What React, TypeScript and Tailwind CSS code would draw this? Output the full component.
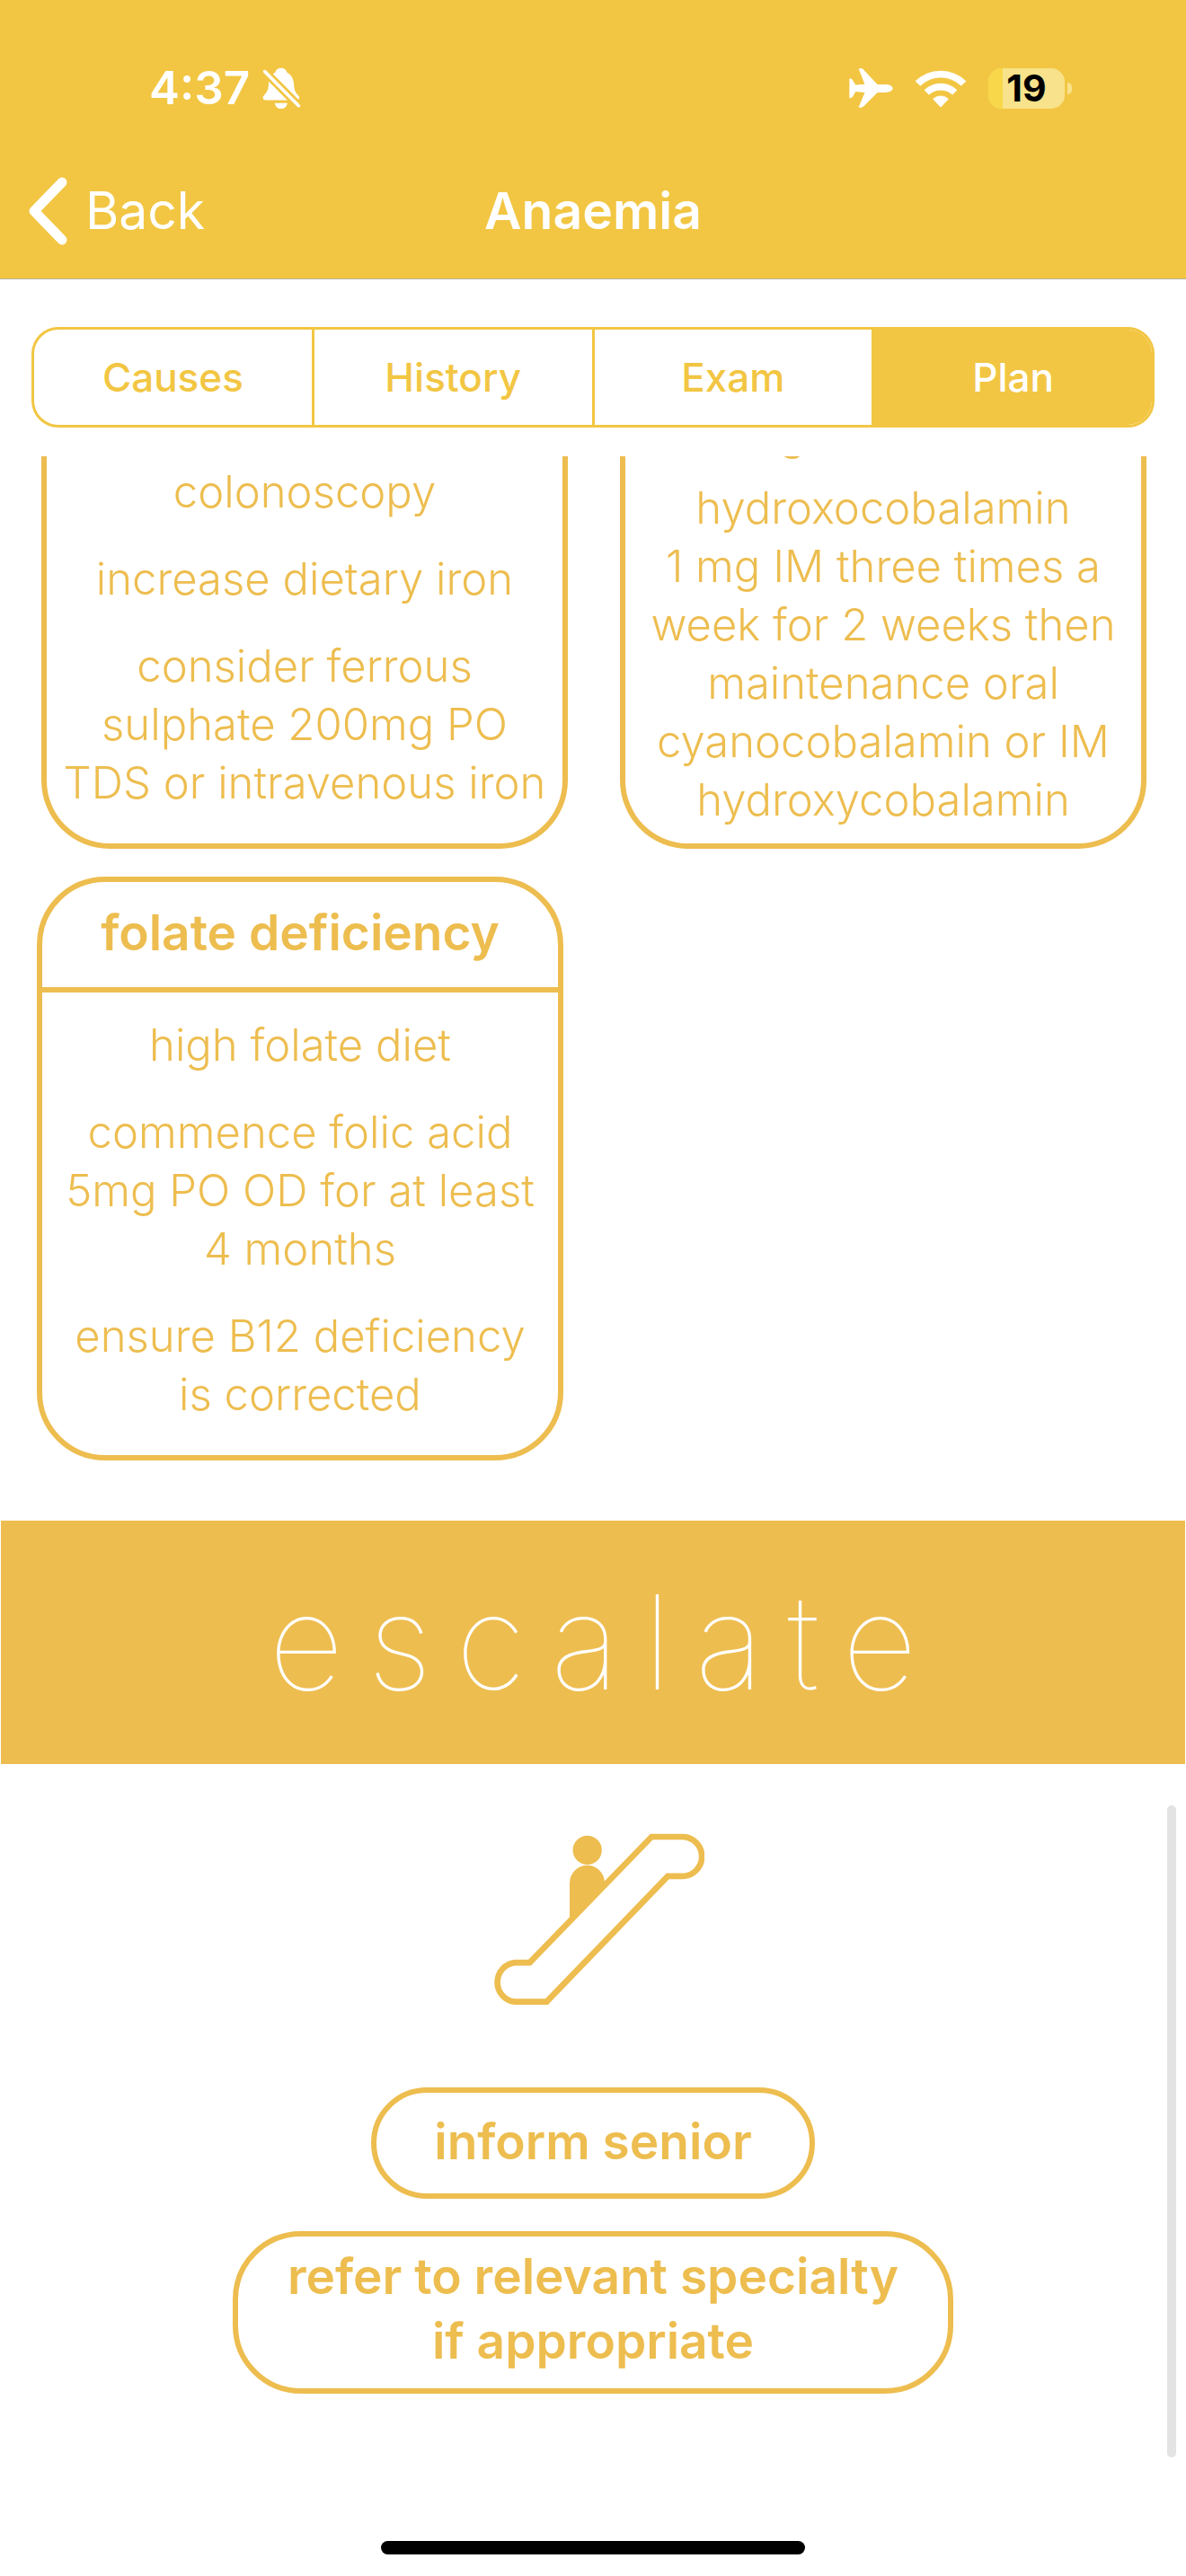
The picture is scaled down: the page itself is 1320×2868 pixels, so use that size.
import type { ReactNode } from "react";

function BellOffIcon() {
  return (
    <svg viewBox="64 44 130 140" className="h-[47px] w-[43px]" aria-hidden="true">
      <path
        fill="#fff"
        d="M127 45C117 45 110 50 107 60C92 68 86 82 85 98C84 120 80 125 70 137C62 146 66 153 76 153H178C188 153 192 146 184 137C174 125 171 118 170 98C168 80 162 68 147 60C144 50 137 45 127 45Z"
      />
      <path fill="#fff" d="M106 163H148C146 176 138 182 127 182S108 176 106 163Z" />
      <path stroke="#f2c643" strokeWidth="28" d="M66 51L196 182" />
      <path stroke="#fff" strokeWidth="11" strokeLinecap="round" d="M72 57L186 172" />
    </svg>
  );
}

function AirplaneIcon() {
  return (
    <svg viewBox="50 47 149 134" className="h-[44px] w-[49px]" aria-hidden="true">
      <path
        fill="#fff"
        d="M198 115C198 108 188 102 172 102H146L100 53C97 49 94 48 91 48H82L103 101L72 103L62 87C60 83 57 81 51 82V148C57 148 60 147 62 144L72 126L103 129L82 180H91C94 180 97 179 100 176L146 129H172C188 129 198 123 198 115Z"
      />
    </svg>
  );
}

function WifiIcon() {
  return (
    <svg viewBox="268 44 175 129" className="h-[43px] w-[58px]" aria-hidden="true">
      <g fill="#fff" stroke="#fff" strokeWidth="2" strokeLinejoin="round">
        <path d="M271 84A122 122 0 0 1 440 84L424 99A98 98 0 0 0 287 99Z" />
        <path d="M301 114A79 79 0 0 1 410 114L395 129A58 58 0 0 0 316 129Z" />
        <path d="M330 144A37 37 0 0 1 381 144L355.500 171Z" />
      </g>
    </svg>
  );
}

function EscalatorIcon() {
  return (
    <svg viewBox="84 95 708 577" className="h-[192px] w-[236px]" aria-hidden="true">
      <g fill="#edbd4f">
        <circle cx="401" cy="151.500" r="48.500" />
        <path d="M342 390V261A58.500 58.500 0 0 1 459 261V270Z" />
      </g>
      <path
        fill="#fff"
        stroke="#edbd4f"
        strokeWidth="20"
        d="M616 107H718A66 66 0 0 1 718 239H670L265 659H158A66 66 0 0 1 158 528H208Z"
      />
    </svg>
  );
}

function Battery({ level }: { level: number }) {
  return (
    <div className="flex items-center gap-[3px]">
      <div className="grid h-[45px] w-[85px] items-center rounded-[15px] bg-[#f8e28b]">
        <div
          className="col-start-1 row-start-1 h-full rounded-l-[15px] bg-[#f8d74a]"
          style={{ width: `${level}%` }}
        />
        <span className="col-start-1 row-start-1 text-center text-[41px] leading-[45px] font-bold text-black">
          {level}
        </span>
      </div>
      <div className="h-[13px] w-[5px] rounded-r-full bg-[#f8e28b]" />
    </div>
  );
}

function Lines({ of }: { of: string[] }) {
  return (
    <p>
      {of.map((line) => (
        <span key={line} className="block">
          {line}
        </span>
      ))}
    </p>
  );
}

function CardBody({ className, children }: { className: string; children: ReactNode }) {
  return (
    <div className={`flex flex-col text-center text-[49px] leading-[65px] font-light ${className}`}>
      {children}
    </div>
  );
}

const tabs = ["Causes", "History", "Exam", "Plan"];

export default function App() {
  return (
    <div className="flex min-h-screen flex-col bg-white font-['Inter',sans-serif] text-[#edbd4f]">
      <header className="border-b border-[#b5b19f] bg-[#f2c643] text-white">
        <div className="flex h-[160px] items-center justify-between pt-9 pr-[127px] pl-[166px]">
          <div className="flex items-center gap-[14px]">
            <span className="text-[51px] leading-[60px] font-semibold">4:37</span>
            <BellOffIcon />
          </div>
          <div className="flex items-center gap-6">
            <AirplaneIcon />
            <WifiIcon />
            <Battery level={19} />
          </div>
        </div>
        <nav className="grid h-[150px] grid-cols-3 items-center px-[31px] text-[57px] leading-[72px]">
          <button type="button" className="flex items-center gap-5">
            <svg viewBox="0 0 44 76" className="h-[76px] w-[44px]" fill="none" aria-hidden="true">
              <path
                d="M38 6L7 38L38 70"
                stroke="#fff"
                strokeWidth="11"
                strokeLinecap="round"
                strokeLinejoin="round"
              />
            </svg>
            Back
          </button>
          <h1 className="text-center font-semibold">Anaemia</h1>
        </nav>
      </header>

      <div className="mx-[35px] mt-[53px] mb-8 flex h-[112px] overflow-hidden rounded-[30px] border-[3px] border-[#f2c643] text-[44px] font-medium text-[#f2c643]">
        {tabs.map((tab) => (
          <button
            key={tab}
            type="button"
            aria-pressed={tab === "Plan"}
            className="flex-1 border-l-[3px] border-[#f2c643] first:border-l-0 aria-pressed:bg-[#f2c643] aria-pressed:text-white"
          >
            {tab}
          </button>
        ))}
      </div>

      <main className="relative flex-1 overflow-hidden">
        <div className="grid grid-cols-2 gap-[58px] pr-[44px] pl-[46px]">
          <section className="rounded-b-[76px] border-x-[6px] border-b-[6px] border-[#edbd4f]">
            <CardBody className="gap-8 pt-[7px] pb-[35px]">
              <p>colonoscopy</p>
              <p>increase dietary iron</p>
              <Lines of={["consider ferrous", "sulphate 200mg PO", "TDS or intravenous iron"]} />
            </CardBody>
          </section>
          <section className="rounded-b-[76px] border-x-[6px] border-b-[6px] border-[#edbd4f]">
            <CardBody className="-mt-[58px] gap-[18px] pb-4">
              <p className="pr-[202px]">g</p>
              <Lines
                of={[
                  "hydroxocobalamin",
                  "1 mg IM three times a",
                  "week for 2 weeks then",
                  "maintenance oral",
                  "cyanocobalamin or IM",
                  "hydroxycobalamin",
                ]}
              />
            </CardBody>
          </section>
        </div>

        <div className="mt-[31px] grid grid-cols-2 gap-[58px] pr-[49px] pl-[41px]">
          <section className="rounded-[76px] border-[6px] border-[#edbd4f]">
            <h2 className="border-b-[6px] border-[#edbd4f] pt-5 pb-[25px] text-center text-[55px] leading-[72px] font-semibold">
              folate deficiency
            </h2>
            <CardBody className="gap-8 pt-[26px] pb-[35px]">
              <p>high folate diet</p>
              <Lines of={["commence folic acid", "5mg PO OD for at least", "4 months"]} />
              <Lines of={["ensure B12 deficiency", "is corrected"]} />
            </CardBody>
          </section>
        </div>

        <h2 className="mx-px mt-[67px] flex h-[271px] items-center justify-center bg-[#edbd4f] pl-[26px] text-[146px] font-thin tracking-[0.18em] text-white">
          escalate
        </h2>

        <div className="mt-[77px] flex flex-col items-center text-center text-[55px] leading-[72px] font-semibold">
          <div className="pl-3">
            <EscalatorIcon />
          </div>
          <p className="mt-[91px] rounded-full border-[6px] border-[#edbd4f] px-16 pt-[18px] pb-[22px]">
            inform senior
          </p>
          <div className="mt-9 rounded-[76px] border-[6px] border-[#edbd4f] px-[55px] pt-2 pb-[17px]">
            <Lines of={["refer to relevant specialty", "if appropriate"]} />
          </div>
        </div>

        <div className="absolute top-[1502px] right-[11px] h-[726px] w-[10px] rounded-full bg-[#e3e3e3]" />
      </main>

      <footer className="flex justify-center pb-6">
        <div className="h-[15px] w-[472px] rounded-full bg-black" />
      </footer>
    </div>
  );
}
